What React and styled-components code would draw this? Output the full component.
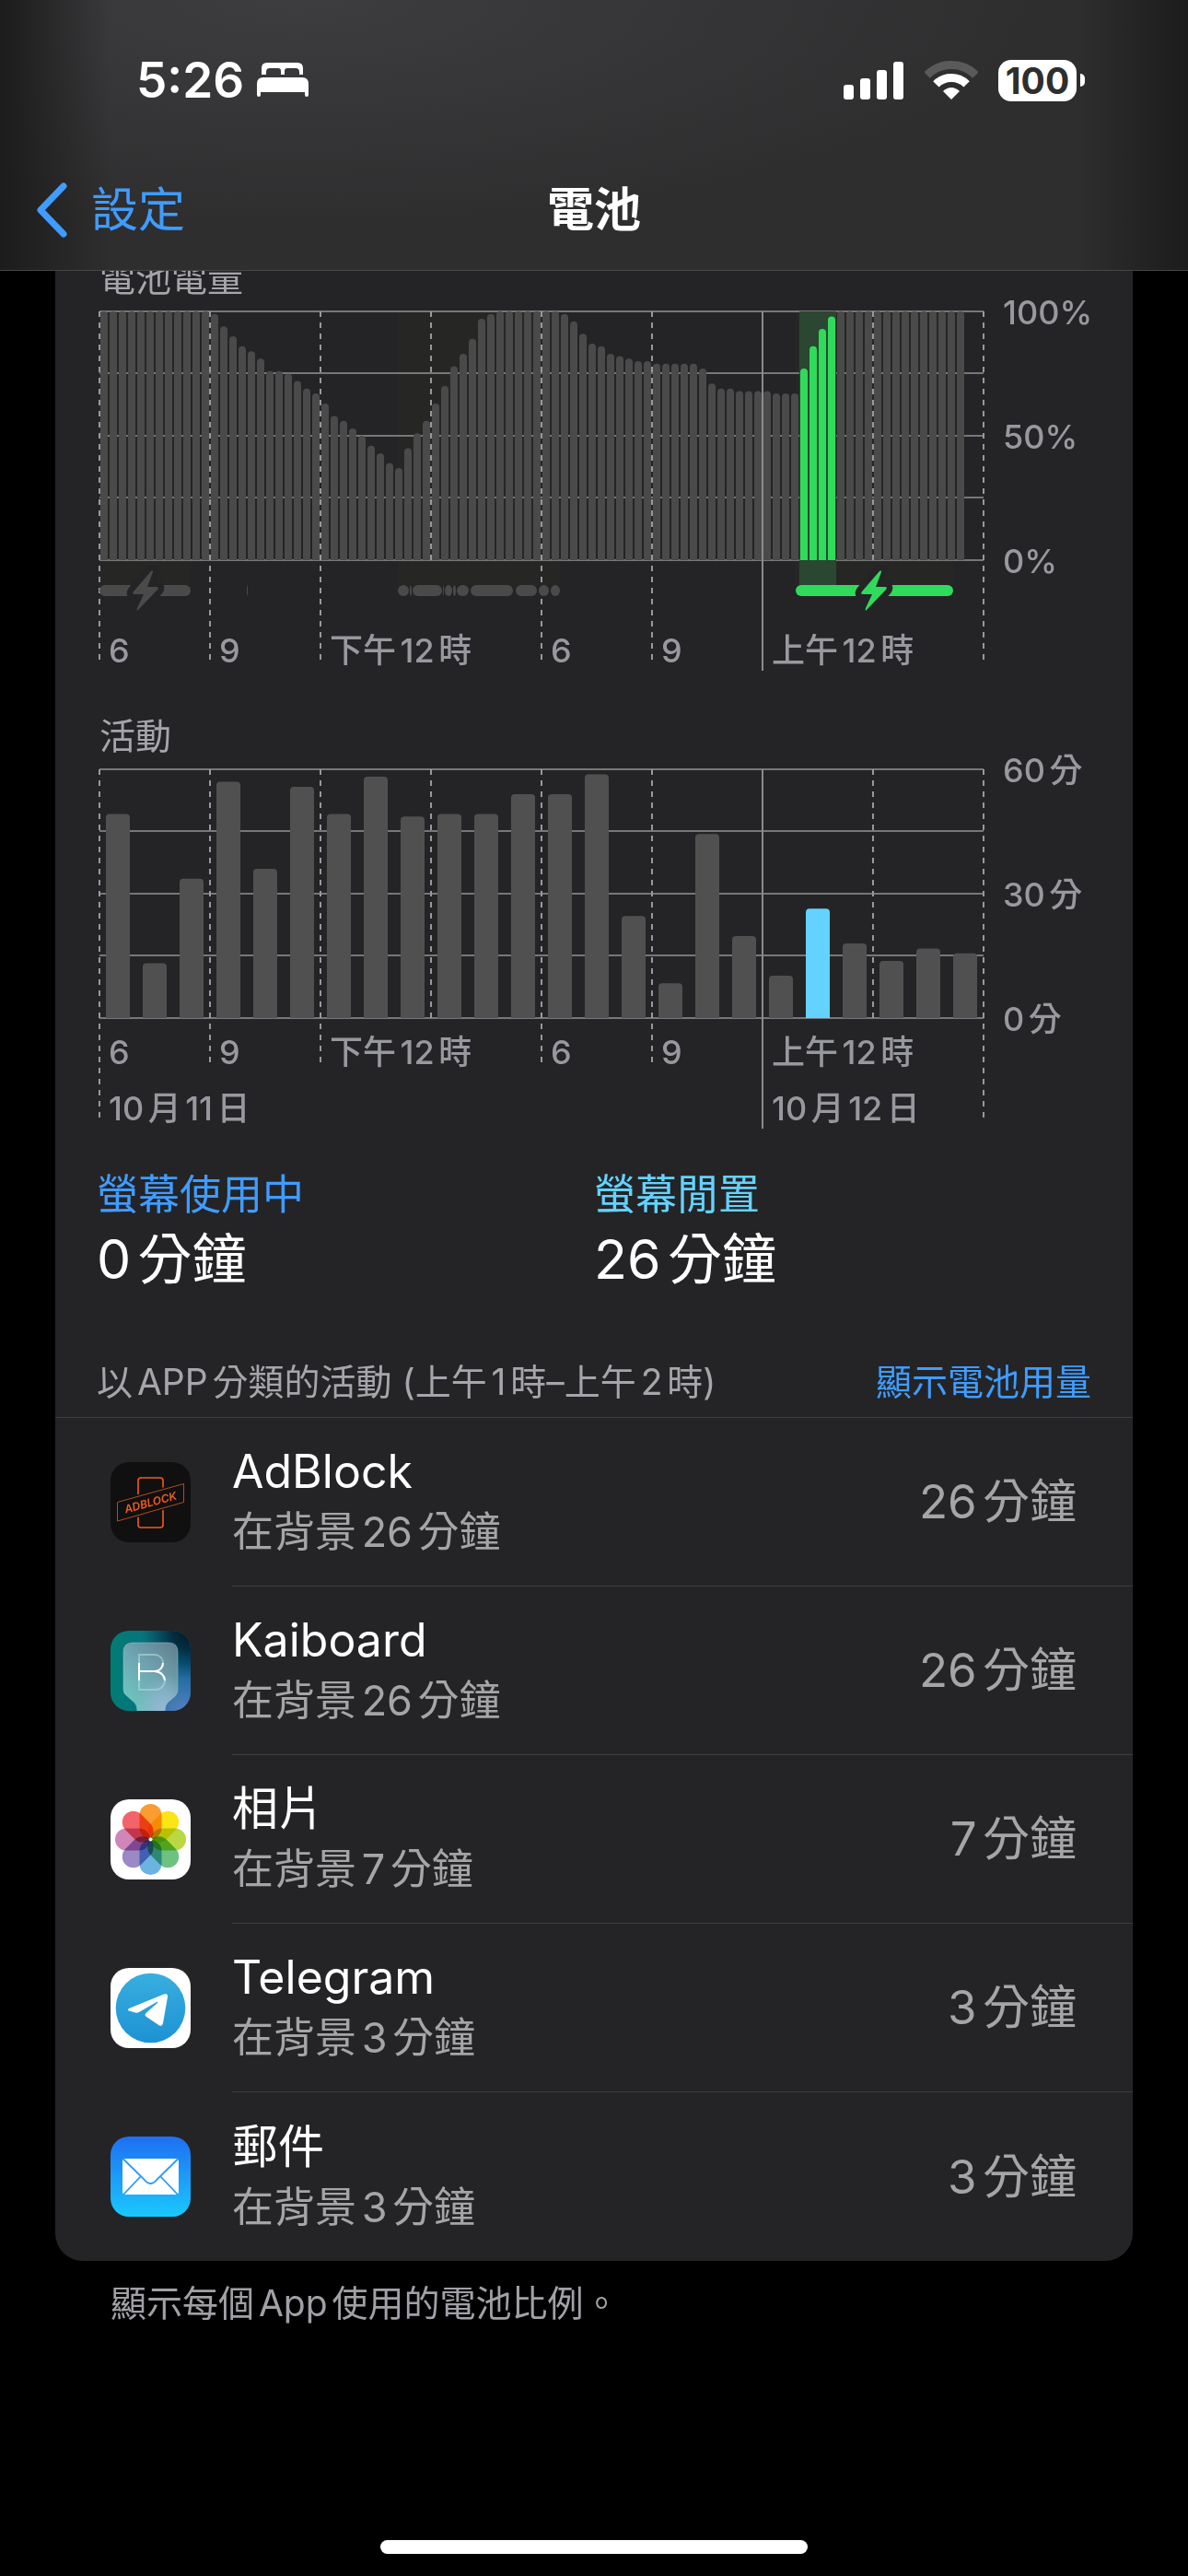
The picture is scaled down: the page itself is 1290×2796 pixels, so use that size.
import styled, { createGlobalStyle } from "styled-components";

// Battery level in percent, one sample every 15 minutes
const levels = [
  100, 100, 100, 100, 100, 100, 100, 100, 100, 100, 100, 100, 99, 94, 90, 86,
  84, 81, 76, 76, 75, 72, 69, 67, 63, 58, 56, 53, 50, 46, 43, 39, 37, 45, 51,
  56, 63, 70, 78, 83, 89, 97, 99, 100, 100, 100, 100, 100, 100, 100, 99, 96,
  91, 87, 86, 83, 82, 81, 80, 80, 79, 79, 79, 79, 79, 77, 71, 69, 69, 68, 68,
  68, 68, 67, 67, 67, 77, 86, 93, 98, 100, 100, 100, 100, 100, 100, 100, 100,
  100, 100, 100, 100, 100, 100,
];

// Height of the activity bars in percent of one hour
const activity = [
  82, 22, 56, 95, 60, 93, 82, 97, 81, 82, 82, 90, 90, 98, 41, 14, 74, 33, 17,
  44, 30, 23, 28, 26,
];

// Charging periods as [start, end] on the 0-960 time scale
const charging = [
  [160, 161],
  [324, 336],
  [337, 339],
  [340, 372],
  [373, 374],
  [375, 383],
  [384, 387],
  [388, 401],
  [403, 449],
  [452, 475],
  [477, 488],
  [490, 500],
];

const levelTicks = [
  { pos: 0, text: "6", end: 384 },
  { pos: 1, text: "9", end: 384 },
  { pos: 2, text: "下午12時", end: 384 },
  { pos: 3, end: 270 },
  { pos: 4, text: "6", end: 384 },
  { pos: 5, text: "9", end: 384 },
  { pos: 6, text: "上午12時", end: 390, solid: true },
  { pos: 7, end: 270 },
  { pos: 8, end: 384 },
];

const activityTicks = [
  { pos: 0, text: "6", date: "10月11日", end: 384 },
  { pos: 1, text: "9", end: 324 },
  { pos: 2, text: "下午12時", end: 324 },
  { pos: 3, end: 270 },
  { pos: 4, text: "6", end: 324 },
  { pos: 5, text: "9", end: 324 },
  { pos: 6, text: "上午12時", date: "10月12日", end: 390, solid: true },
  { pos: 7, end: 270 },
  { pos: 8, end: 384 },
];

const apps = [
  { name: "AdBlock", minutes: 26, icon: AdBlockIcon },
  { name: "Kaiboard", minutes: 26, icon: KaiboardIcon },
  { name: "相片", minutes: 7, icon: PhotosIcon },
  { name: "Telegram", minutes: 3, icon: TelegramIcon },
  { name: "郵件", minutes: 3, icon: MailIcon },
];

const percent = (value) => `${(value / 960) * 100}%`;

export default function App() {
  return (
    <>
      <GlobalStyle />
      <Page>
        <Header>
          <StatusBar>
            <StatusGroup>
              <Time>5:26</Time>
              <BedIcon />
            </StatusGroup>
            <StatusGroup $wide>
              <SignalIcon />
              <WifiIcon />
              <Battery>
                <BatteryLevel>100</BatteryLevel>
                <BatteryTip />
              </Battery>
            </StatusGroup>
          </StatusBar>
          <NavBar>
            <BackLink href="#settings">
              <BackIcon />
              設定
            </BackLink>
            <Title>電池</Title>
          </NavBar>
        </Header>

        <Main>
          <Card>
            <ChartTitle>電池電量</ChartTitle>
            <LevelChart />
            <ChartTitle $spaced>活動</ChartTitle>
            <ActivityChart />

            <Stats>
              <div>
                <StatLabel $color="#409cff">螢幕使用中</StatLabel>
                <StatValue>0分鐘</StatValue>
              </div>
              <div>
                <StatLabel $color="#64d2ff">螢幕閒置</StatLabel>
                <StatValue>26分鐘</StatValue>
              </div>
            </Stats>

            <SectionHead>
              <SectionTitle>以APP分類的活動 (上午1時–上午2時)</SectionTitle>
              <LinkButton type="button">顯示電池用量</LinkButton>
            </SectionHead>

            <AppList>
              {apps.map(({ name, minutes, icon: Icon }) => (
                <AppRow key={name}>
                  <Icon />
                  <AppBody>
                    <div>
                      <AppName>{name}</AppName>
                      <AppDetail>{`在背景${minutes}分鐘`}</AppDetail>
                    </div>
                    <AppTime>{`${minutes}分鐘`}</AppTime>
                  </AppBody>
                </AppRow>
              ))}
            </AppList>
          </Card>
          <Footnote>顯示每個App使用的電池比例。</Footnote>
        </Main>
        <HomeIndicator />
      </Page>
    </>
  );
}

// Grid lines shared by both charts
function HorizontalLines() {
  return [0, 67, 135, 202, 270].map((y) => (
    <rect key={y} x="0" y={y - 1} width="100%" height="2" fill="#77777b" />
  ));
}

function Ticks({ ticks, labelY }) {
  return ticks.map(({ pos, text, date, end, solid }) => {
    const x = `${pos * 12.5}%`;
    return (
      <g key={pos}>
        <line
          x1={x}
          x2={x}
          y1="0"
          y2={end}
          stroke={solid ? "#8a8a8e" : "#98989d"}
          strokeWidth="2"
          strokeDasharray={solid ? undefined : "6 6"}
        />
        {text && (
          <AxisText x={x} y={labelY} dx="10">
            {text}
          </AxisText>
        )}
        {date && (
          <AxisText x={x} y="381" dx="10">
            {date}
          </AxisText>
        )}
      </g>
    );
  });
}

function ValueLabels({ values }) {
  return values.map((value, i) => (
    <AxisText key={value} x="100%" y={14 + i * 135} dx="21">
      {value}
    </AxisText>
  ));
}

function Bolt({ at, color }) {
  return (
    <svg x={percent(at)} y="303" overflow="visible">
      <path
        d="M6-21-13 1q-2 3 1 3h10l-7 15q-1 4 1 2L13-1q2-3-1-3H2L8-20q0-3-2-1z"
        fill={color}
        stroke="#242426"
        strokeWidth="13"
        strokeLinejoin="round"
        paintOrder="stroke"
      />
    </svg>
  );
}

function LevelChart() {
  return (
    <ChartFrame>
      <ChartSvg role="img" aria-label="電池電量">
        <rect x={percent(0)} y="0" width={percent(99)} height="297" fill="#262625" />
        <rect x={percent(324)} y="0" width={percent(176)} height="297" fill="#262625" />
        <rect x={percent(756)} y="0" width={percent(171)} height="297" fill="#262625" />
        <HorizontalLines />
        <rect x={percent(760)} y="0" width={percent(40)} height="297" fill="#2b4731" />
        {levels.map((level, i) => (
          <LevelBar
            key={i}
            x={percent(i * 10 + 1)}
            y={270 - level * 2.7}
            width={percent(8)}
            height={level * 2.7}
            rx="4"
            $active={i > 75 && i < 80}
          />
        ))}
        {/* square off the feet of the bars */}
        {levels.map((level, i) => (
          <LevelBar
            key={i}
            x={percent(i * 10 + 1)}
            y="260"
            width={percent(8)}
            height="10"
            $active={i > 75 && i < 80}
          />
        ))}
        <Ticks ticks={levelTicks} labelY="381" />
        <rect x={percent(0)} y="297" width={percent(99)} height="12" rx="6" fill="#4a4a4a" />
        {charging.map(([from, to]) => (
          <rect
            key={from}
            x={percent(from)}
            y="297"
            width={percent(to - from)}
            height="12"
            rx="6"
            fill="#4a4a4a"
          />
        ))}
        <rect x={percent(756)} y="297" width={percent(171)} height="12" rx="6" fill="#30db5b" />
        <Bolt at={50} color="#4a4a4a" />
        <Bolt at={841} color="#30db5b" />
        <ValueLabels values={["100%", "50%", "0%"]} />
      </ChartSvg>
    </ChartFrame>
  );
}

function ActivityChart() {
  return (
    <ChartFrame>
      <ChartSvg role="img" aria-label="活動">
        <HorizontalLines />
        <Ticks ticks={activityTicks} labelY="320" />
        {activity.map((value, i) => (
          <g key={i} fill={i === 19 ? "#64d2ff" : "#505050"}>
            <rect
              x={percent(i * 40 + 7)}
              y={270 - value * 2.7}
              width={percent(26)}
              height={value * 2.7}
              rx="4"
            />
            <rect x={percent(i * 40 + 7)} y="260" width={percent(26)} height="10" />
          </g>
        ))}
        <ValueLabels values={["60分", "30分", "0分"]} />
      </ChartSvg>
    </ChartFrame>
  );
}

function BackIcon() {
  return (
    <svg width="36" height="60" viewBox="0 0 36 60" fill="none">
      <path
        d="M31 4 6 30l25 26"
        stroke="currentColor"
        strokeWidth="7"
        strokeLinecap="round"
        strokeLinejoin="round"
      />
    </svg>
  );
}

function BedIcon() {
  return (
    <svg width="56" height="38" viewBox="0 0 56 38" fill="#fff">
      <path d="M5 13V6q0-6 6-6h33q6 0 6 6v7h-4v-3q0-4-4-4H33q-3 0-3 3v4h-4V9q0-3-3-3h-9q-4 0-4 4v3z" />
      <path d="M7 16h42q7 0 7 7v12q0 2-2 2t-2-2v-3H4v3q0 2-2 2t-2-2V23q0-7 7-7z" />
    </svg>
  );
}

function SignalIcon() {
  return (
    <svg width="66" height="41" viewBox="0 0 66 41" fill="#fff">
      <rect x="0" y="25" width="11" height="16" rx="3" />
      <rect x="18" y="18" width="11" height="23" rx="3" />
      <rect x="36" y="9" width="11" height="32" rx="3" />
      <rect x="54" y="0" width="11" height="41" rx="3" />
    </svg>
  );
}

function WifiIcon() {
  return (
    <svg width="58" height="42" viewBox="0 0 58 42" fill="none" strokeWidth="9">
      <path d="M2.500 15.500A37.500 37.500 0 0 1 55.500 15.500" stroke="#5a5a5b" />
      <path d="M12.400 25.400A23.500 23.500 0 0 1 45.600 25.400" stroke="#fff" />
      <path d="M29 42 20 33q9-8 18 0z" fill="#fff" />
    </svg>
  );
}

function AdBlockIcon() {
  return (
    <AppIcon viewBox="0 0 87 87">
      <rect width="87" height="87" rx="20" fill="#101010" />
      <rect x="30" y="17" width="27" height="54" rx="3" fill="none" stroke="#f15a24" strokeWidth="1.6" />
      <path d="M7.5 43.5l72-20v20l-72 20.5z" fill="#101010" stroke="#101010" strokeWidth="4" />
      <path d="M7.5 43.5l72-20v20l-72 20.5z" fill="none" stroke="#b34a24" strokeWidth="1" />
      <IconText x="43.5" y="48" transform="rotate(-15 43.5 44)">
        ADBLOCK
      </IconText>
    </AppIcon>
  );
}

const kaiPanel =
  "M24 13h39q10 0 10 10v41q0 4-3 7l-8 7q-3 3-3 9v4H29v-4q0-6-3-9l-8-7q-4-3-4-7V23q0-10 10-10z";

function KaiboardIcon() {
  return (
    <AppIcon viewBox="0 0 87 87">
      <defs>
        <linearGradient id="kai-base" x1="0" y1="0" x2="1" y2="0">
          <stop offset="0" stopColor="#007c74" />
          <stop offset="0.5" stopColor="#08727f" />
          <stop offset="1" stopColor="#0f6298" />
        </linearGradient>
        <radialGradient id="kai-dark" cx="1" cy="0" r="0.6">
          <stop offset="0" stopColor="#001420" />
          <stop offset="0.4" stopColor="#00202e" stopOpacity="0.8" />
          <stop offset="1" stopColor="#00303e" stopOpacity="0" />
        </radialGradient>
        <radialGradient id="kai-light" cx="0.9" cy="1" r="0.6">
          <stop offset="0" stopColor="#5580c0" />
          <stop offset="1" stopColor="#5580c0" stopOpacity="0" />
        </radialGradient>
        <linearGradient id="kai-panel" x1="0.2" y1="1" x2="0.9" y2="0">
          <stop offset="0" stopColor="#6cc9bf" />
          <stop offset="0.5" stopColor="#70a8b4" />
          <stop offset="1" stopColor="#62808f" />
        </linearGradient>
        <radialGradient id="kai-glow" cx="0.75" cy="0.95" r="0.5">
          <stop offset="0" stopColor="#98b8d8" />
          <stop offset="1" stopColor="#98b8d8" stopOpacity="0" />
        </radialGradient>
        <clipPath id="kai-clip">
          <rect width="87" height="87" rx="20" />
        </clipPath>
      </defs>
      <g clipPath="url(#kai-clip)">
        <rect width="87" height="87" fill="url(#kai-base)" />
        <rect width="87" height="87" fill="url(#kai-light)" />
        <rect width="87" height="87" fill="url(#kai-dark)" />
        <path d={kaiPanel} fill="url(#kai-panel)" />
        <path d={kaiPanel} fill="url(#kai-glow)" stroke="#9cc4ce" strokeOpacity="0.5" />
        <g fill="none" strokeWidth="2">
          <path
            d="M31 26h17a9 9 0 0 1 0 18H31h18a10 10 0 0 1 0 20H31z"
            stroke="#a9d0d6"
            strokeOpacity="0.7"
          />
          <path d="M31 35v19M31 44h17a9 9 0 0 0 9-9M48 44q10 1 11 10" stroke="#fff" />
        </g>
      </g>
    </AppIcon>
  );
}

const petals = [
  "#f99d32",
  "#fce416",
  "#b9d843",
  "#6dc281",
  "#6cb2e3",
  "#9a89c6",
  "#cf86b8",
  "#f2646a",
];

function PhotosIcon() {
  return (
    <AppIcon viewBox="0 0 87 87">
      <rect width="87" height="87" rx="20" fill="#fff" />
      <PetalGroup>
        {petals.map((color, i) => (
          <Petal
            key={color}
            x="31.5"
            y="5"
            width="24"
            height="38"
            rx="12"
            fill={color}
            transform={`rotate(${i * 45} 43.5 43.5)`}
          />
        ))}
      </PetalGroup>
      <circle cx="43.5" cy="43.5" r="2" fill="#fff" />
    </AppIcon>
  );
}

function TelegramIcon() {
  return (
    <AppIcon viewBox="0 0 87 87">
      <defs>
        <linearGradient id="telegram-disc" x1="0" y1="0" x2="0" y2="1">
          <stop offset="0" stopColor="#38aee0" />
          <stop offset="1" stopColor="#1d92d3" />
        </linearGradient>
      </defs>
      <rect width="87" height="87" rx="20" fill="#fff" />
      <circle cx="43.5" cy="43.5" r="37.8" fill="url(#telegram-disc)" />
      <path
        d="M20 44 58 28.5q4.5-1.5 4 3L57 60q-1 4-4 2.5L39 53q-3-2 0-4.500L51 38q1-2-1-1L31 48q-2 1-4 .5l-7-2q-2-1.2 0-2.5z"
        fill="#fff"
      />
    </AppIcon>
  );
}

function MailIcon() {
  return (
    <AppIcon viewBox="0 0 87 87">
      <defs>
        <linearGradient id="mail-sky" x1="0" y1="0" x2="0" y2="1">
          <stop offset="0" stopColor="#1e6ff2" />
          <stop offset="1" stopColor="#1ac8fd" />
        </linearGradient>
      </defs>
      <rect width="87" height="87" rx="20" fill="url(#mail-sky)" />
      <rect x="13" y="24" width="61" height="39" rx="3" fill="#fff" />
      <g fill="none" stroke="#279af8" strokeWidth="1.8">
        <path d="M14 24.5 36 46q7.5 10 15 0l22-21.5" />
        <path d="M14 63 32.5 43.5M73 63 54.5 43.5" />
      </g>
    </AppIcon>
  );
}

const GlobalStyle = createGlobalStyle`
  * {
    box-sizing: border-box;
  }

  body {
    margin: 0;
    background: #000;
    color: #fff;
    font-family: Inter, "Noto Sans CJK TC", sans-serif;
    text-autospace: normal;
  }
`;

const Page = styled.div`
  min-height: 100vh;
  display: flex;
  flex-direction: column;
`;

const Header = styled.header`
  position: sticky;
  top: 0;
  z-index: 1;
  border-bottom: 1px solid #464648;
  background:
    linear-gradient(90deg, #1c1c1c 0, transparent 120px),
    linear-gradient(270deg, #1c1c1c 0, transparent 120px),
    radial-gradient(ellipse at 25% 0, #3d3d40 0, transparent 60%),
    #2e2e2f;
`;

const StatusBar = styled.div`
  height: 162px;
  padding: 12px 112px 0 148px;
  display: flex;
  align-items: center;
  justify-content: space-between;
`;

const StatusGroup = styled.div`
  display: flex;
  align-items: center;
  gap: ${({ $wide }) => ($wide ? "22px" : "14px")};
`;

const Time = styled.span`
  font-size: 53px;
  font-weight: 600;
`;

const Battery = styled.div`
  display: flex;
  align-items: center;
  gap: 4px;
`;

const BatteryLevel = styled.span`
  width: 85px;
  height: 45px;
  border-radius: 14px;
  background: #fff;
  color: #2e2e2f;
  font-size: 39px;
  font-weight: 700;
  line-height: 45px;
  text-align: center;
`;

const BatteryTip = styled.span`
  width: 5px;
  height: 14px;
  border-radius: 0 7px 7px 0;
  background: #fff;
`;

const NavBar = styled.nav`
  height: 131px;
  padding: 0 38px;
  display: grid;
  grid-template-columns: 1fr auto 1fr;
  align-items: center;
`;

const BackLink = styled.a`
  display: flex;
  align-items: center;
  gap: 25px;
  color: #409cff;
  font-size: 51px;
  line-height: 60px;
  text-decoration: none;
`;

const Title = styled.h1`
  margin: 0;
  font-size: 51px;
  font-weight: 600;
  line-height: 60px;
`;

const Main = styled.main`
  /* the list is scrolled a little way under the header */
  margin-top: -36px;
  padding: 0 60px;
  flex: 1;
`;

const Card = styled.section`
  padding-top: 17px;
  border-radius: 30px;
  background: #242426;
`;

const ChartTitle = styled.h2`
  margin: ${({ $spaced }) => ($spaced ? "44px" : "0")} 48px 9px;
  color: #a5a5ab;
  font-size: 39px;
  font-weight: 400;
  line-height: 54px;
`;

const ChartFrame = styled.div`
  padding: 0 162px 0 48px;
`;

const ChartSvg = styled.svg`
  display: block;
  width: 100%;
  height: 390px;
  overflow: visible;
`;

const AxisText = styled.text`
  fill: #98989f;
  font-size: 36px;
  font-weight: 500;
`;

const LevelBar = styled.rect`
  fill: ${({ $active }) => ($active ? "#30db5b" : "#4a4a4a")};
`;

const Stats = styled.div`
  padding: 42px 45px 0;
  display: grid;
  grid-template-columns: 1fr 1fr;
`;

const StatLabel = styled.div`
  color: ${({ $color }) => $color};
  font-size: 45px;
  line-height: 60px;
`;

const StatValue = styled.div`
  font-size: 59px;
  line-height: 80px;
`;

const SectionHead = styled.div`
  padding: 66px 45px 11px;
  border-bottom: 1px solid #3e3e41;
  display: flex;
  justify-content: space-between;
  font-size: 39px;
  line-height: 54px;
`;

const SectionTitle = styled.h2`
  margin: 0;
  color: #a5a5ab;
  font-size: inherit;
  font-weight: 400;
`;

const LinkButton = styled.button`
  padding: 0;
  border: 0;
  background: none;
  color: #409cff;
  font: inherit;
  cursor: pointer;
`;

const AppList = styled.ul`
  margin: 0;
  padding: 0 0 0 60px;
  list-style: none;
`;

const AppBody = styled.div`
  height: 183px;
  padding-right: 61px;
  border-bottom: 1px solid #3e3e41;
  flex: 1;
  display: flex;
  align-items: center;
  justify-content: space-between;
`;

const AppRow = styled.li`
  display: flex;
  align-items: center;
  gap: 45px;

  &:last-child ${AppBody} {
    border-bottom: 0;
  }
`;

const AppIcon = styled.svg`
  width: 87px;
  height: 87px;
  flex: none;
`;

const IconText = styled.text`
  fill: #f15a24;
  font-size: 12px;
  font-style: italic;
  font-weight: 600;
  text-anchor: middle;
`;

const PetalGroup = styled.g`
  isolation: isolate;
`;

const Petal = styled.rect`
  mix-blend-mode: multiply;
`;

const AppName = styled.div`
  font-size: 50px;
  line-height: 66px;
`;

const AppDetail = styled.div`
  color: #a5a5a8;
  font-size: 45px;
  line-height: 66px;
`;

const AppTime = styled.div`
  color: #a5a5a8;
  font-size: 51px;
  line-height: 66px;
`;

const Footnote = styled.p`
  margin: 0;
  padding: 19px 60px;
  color: #a0a0a6;
  font-size: 39px;
  line-height: 54px;
`;

const HomeIndicator = styled.div`
  width: 36%;
  height: 15px;
  margin: 0 auto 24px;
  border-radius: 8px;
  background: #fff;
`;
